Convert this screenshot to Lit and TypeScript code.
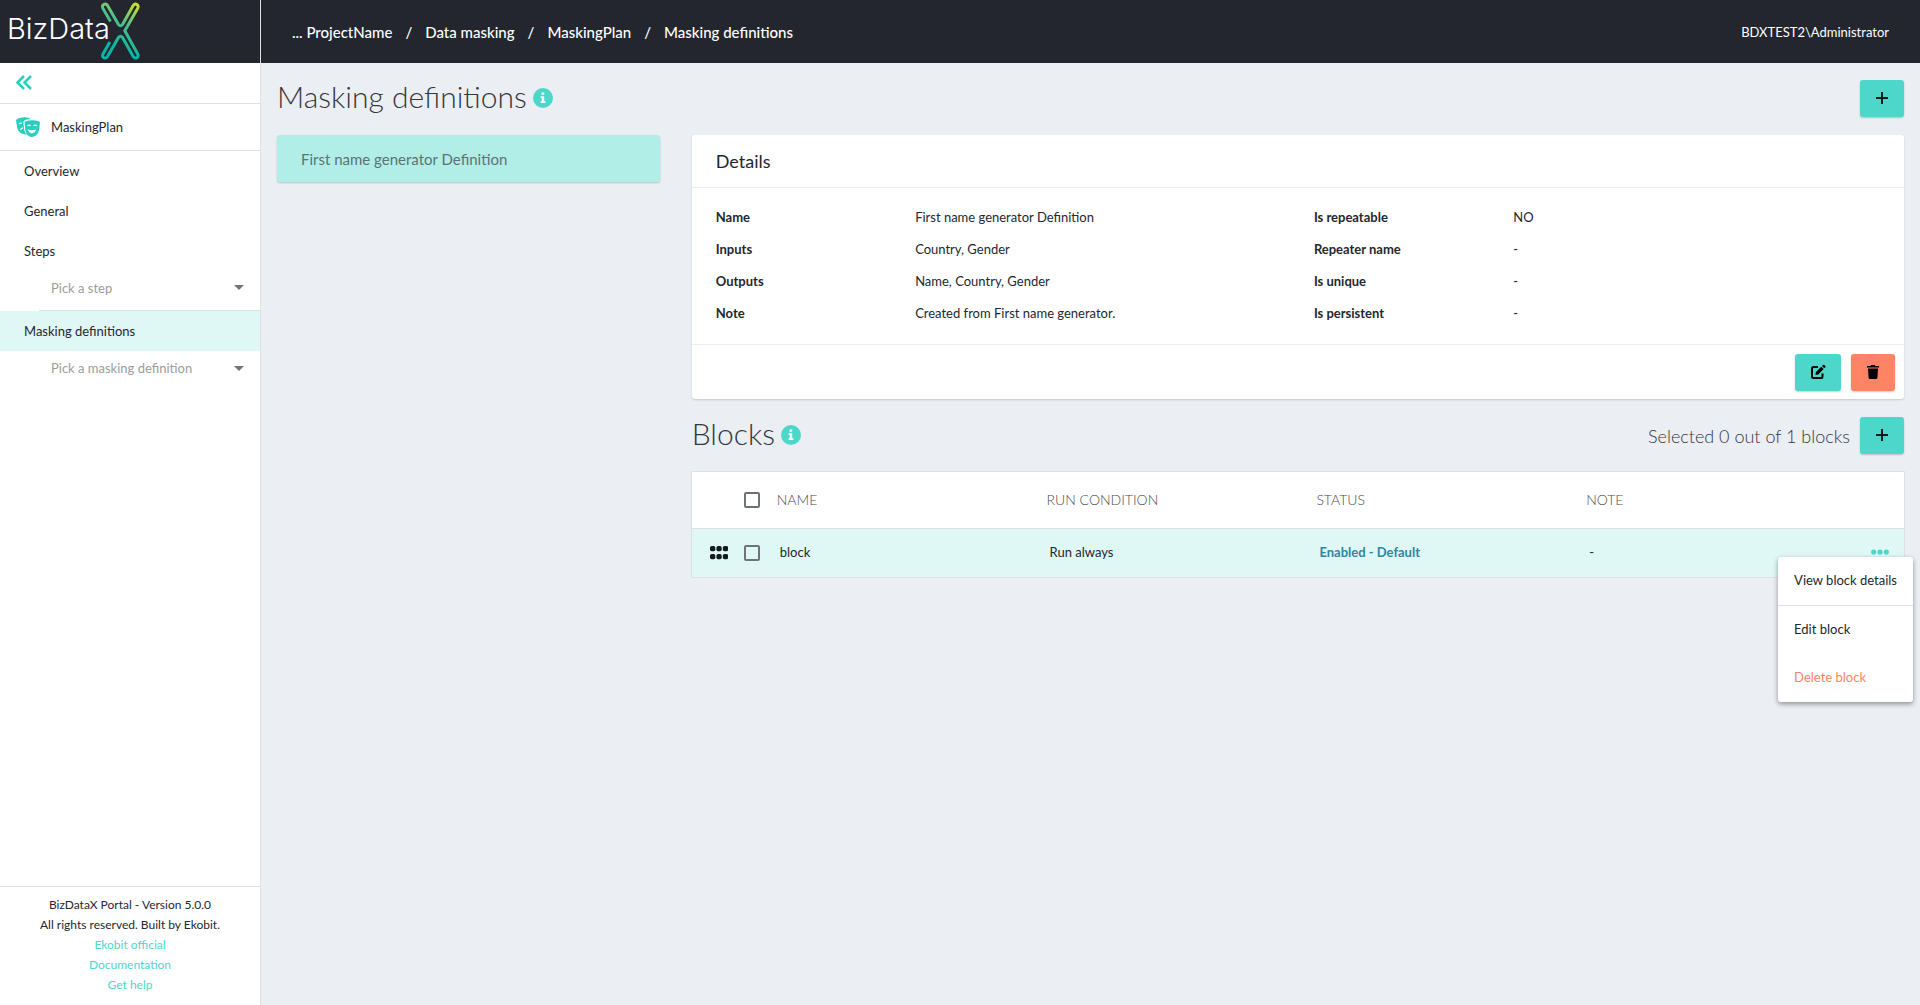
import { LitElement, html, css, svg } from "lit";
import { customElement } from "lit/decorators.js";

const plus = svg`<path d="M6 0v12M0 6h12" fill="none" stroke="#0d1a1c" stroke-width="2"/>`;

@customElement("app-root")
export class AppRoot extends LitElement {
  private details = [
    ["Name", "First name generator Definition", "Is repeatable", "NO"],
    ["Inputs", "Country, Gender", "Repeater name", "-"],
    ["Outputs", "Name, Country, Gender", "Is unique", "-"],
    ["Note", "Created from First name generator.", "Is persistent", "-"],
  ];

  static styles = css`
    :host {
      display: block;
      font-family: Lato, "Liberation Sans", sans-serif;
      font-size: 13px;
      line-height: 20px;
      color: #24272f;
      --teal: #4dd7ca;
      --line: #e0e0e0;
    }
    * { box-sizing: border-box; }
    button, select { font: inherit; border: 0; background: none; padding: 0; margin: 0; cursor: pointer; }
    a { color: inherit; text-decoration: none; }
    svg { display: block; flex: none; }
    h1, h2, h3, p { margin: 0; font-weight: 400; }
    .app { display: grid; grid-template-columns: 261px 1fr; grid-template-rows: 63px 1fr; min-height: 100vh; background: #ebeef3; }
    .brand { background: #23262f; border-right: 1px solid var(--line); display: flex; align-items: center; padding-left: 6px; }
    .wordmark { font-family: Inter, Lato, sans-serif; font-size: 29px; font-weight: 300; }
    .topbar { background: #23262f; color: #fff; display: flex; align-items: center; justify-content: space-between; padding: 0 31px; }
    .crumbs { display: flex; gap: 13px; font-size: 15px; font-weight: 500; }
    .user { font-size: 13px; }
    .side { background: #fff; border-right: 1px solid var(--line); display: flex; flex-direction: column; }
    .collapse { height: 41px; border-bottom: 1px solid var(--line); padding: 0 16px 2px; display: flex; align-items: center; }
    .plan { height: 47px; border-bottom: 1px solid var(--line); padding: 0 16px; display: flex; align-items: center; gap: 11px; }
    .nav { display: flex; flex-direction: column; flex: 1; }
    .item { height: 40px; padding: 0 24px; display: flex; align-items: center; }
    .item.active { background: #dff7f5; }
    .pick { display: grid; align-items: center; height: 40px; margin-left: 39px; padding-bottom: 6px; }
    .pick.lined { border-bottom: 1px solid var(--line); }
    .pick > * { grid-area: 1 / 1; }
    .pick select { appearance: none; width: 100%; height: 32px; padding-left: 12px; color: #9c9c9c; text-align: left; }
    .pick svg { justify-self: end; margin-right: 16px; pointer-events: none; }
    .foot { border-top: 1px solid var(--line); padding: 8px 0 10px; text-align: center; font-size: 12px; display: flex; flex-direction: column; }
    .foot a { color: var(--teal); }
    .main { min-width: 0; }
    .bar { display: flex; align-items: center; justify-content: space-between; padding: 18px 0; }
    .main > .bar { padding: 17px 16px 18px; }
    .title { display: flex; align-items: center; gap: 6px; padding-bottom: 4px; font-size: 30px; line-height: 33px; font-weight: 300; color: #33373f; }
    .title svg { margin-top: 2px; }
    .btn { height: 37px; width: 44px; padding-bottom: 2px; border-radius: 3px; background: var(--teal); display: flex; align-items: center; justify-content: center; box-shadow: 0 1px 2px rgba(0, 0, 0, 0.2); }
    .btn.edit { width: 46px; }
    .btn.danger { background: #ff8364; }
    .cols { display: flex; align-items: flex-start; }
    .list { width: 25%; padding: 0 16px; }
    .body { width: 75%; padding: 0 16px; }
    .def { width: 100%; height: 47px; padding: 0 24px; text-align: left; font-size: 15px; border-radius: 3px; background: #b1eee7; color: #5d7275; box-shadow: 0 1px 2px rgba(0, 0, 0, 0.2); }
    .card { background: #fff; border-radius: 3px; box-shadow: 0 1px 2px rgba(0, 0, 0, 0.16); }
    .card h2 { height: 53px; padding: 0 24px; font-size: 18px; line-height: 52px; border-bottom: 1px solid #ebeef1; }
    .props { display: grid; grid-template-columns: 2fr 4fr 2fr 4fr; margin: 0; padding: 13px 8px 15px; line-height: 32px; }
    .props dt, .props dd { margin: 0; padding: 0 16px; }
    .props dt { font-weight: 700; }
    .actions { border-top: 1px solid #ebeef1; padding: 9px 9px 8px; display: flex; justify-content: flex-end; gap: 10px; }
    .right { display: flex; align-items: center; gap: 10px; font-size: 18px; font-weight: 300; color: #33373f; }
    table { width: 100%; table-layout: fixed; border-collapse: collapse; background: #fff; box-shadow: 0 0 0 1px var(--line); }
    th, td { padding: 0; text-align: left; }
    th { height: 56px; font-size: 14px; font-weight: 300; color: #4c4c4c; }
    td { height: 49px; padding: 0 0 2px 3px; }
    tbody tr { background: #dff7f5; border-top: 1px solid var(--line); }
    .c-lead { width: 85px; }
    .c-end { width: 48px; }
    .lead { padding: 0 0 0 18px; }
    .tools { display: flex; align-items: center; justify-content: space-between; padding-right: 17px; }
    .tools.only { justify-content: flex-end; }
    input { appearance: none; margin: 0; width: 16px; height: 16px; border: 2px solid #6f7373; border-radius: 2px; }
    .status { font-weight: 700; color: #2f86a0; }
    .end { padding: 0 0 2px; }
    .more { position: relative; display: flex; justify-content: center; }
    .menu { position: absolute; top: 8px; right: -9px; z-index: 1; background: #fff; border-radius: 3px; box-shadow: 0 2px 5px rgba(0, 0, 0, 0.4); display: flex; flex-direction: column; white-space: nowrap; }
    .menu button { height: 48px; padding: 0 16px 1px; text-align: left; color: #24272f; }
    .menu button.first { height: 49px; border-bottom: 1px solid var(--line); }
    .menu button.del { color: #ff8364; }
  `;

  private info() {
    return html`<svg width="20" height="20" viewBox="0 0 20 20" aria-hidden="true">
      <circle cx="10" cy="10" r="10" fill="#4dd7ca" />
      <path d="M8.6 4.4h2.6v2.4H8.6zM7.6 8.2h3.6v5h1.200v1.900H7.600v-1.900h1.100v-3.100H7.600z" fill="#fff" />
    </svg>`;
  }

  private caret() {
    return html`<svg width="10" height="5" viewBox="0 0 10 5" aria-hidden="true"><path d="M0 0h10L5 5z" fill="#757575" /></svg>`;
  }

  render() {
    return html`
      <div class="app">
        <a class="brand" href="#" aria-label="BizDataX">
          <svg width="140" height="63" viewBox="6 0 140 63">
            <defs>
              <linearGradient id="g" gradientUnits="userSpaceOnUse" x1="137" y1="3" x2="112" y2="44">
                <stop offset="0" stop-color="#d6e02a" />
                <stop offset="0.5" stop-color="#4fc08a" />
                <stop offset="1" stop-color="#07b6a6" />
              </linearGradient>
            </defs>
            <text class="wordmark" x="7" y="39" fill="#fff">BizData</text>
            <path d="M110.500 21.500L102.800 8.200Q101.600 5 104.300 4.200Q106.300 3.600 107.500 5.600L118.500 24.600Q120.500 27 122.500 24.600L133.200 5.600Q134.600 3.400 136.600 4.300Q139 5.400 137.700 8.200L124.800 30.700L137.700 54Q139 56.800 136.600 57.900Q134.500 58.600 133.200 56.500L122.500 37.400Q120.500 35 118.500 37.400L107.500 56.500Q106.200 58.600 104.100 57.900Q101.700 56.800 103 54L109.800 42" fill="none" stroke="url(#g)" stroke-width="3" stroke-linecap="butt" />
          </svg>
        </a>
        <header class="topbar">
          <nav class="crumbs" aria-label="Breadcrumb">
            <a href="#">... ProjectName</a><span>/</span><a href="#">Data masking</a><span>/</span><a href="#">MaskingPlan</a><span>/</span><a href="#">Masking definitions</a>
          </nav>
          <span class="user">BDXTEST2\\Administrator</span>
        </header>
        <aside class="side">
          <div class="collapse">
            <button aria-label="Collapse menu">
              <svg width="16" height="15" viewBox="0 0 16 15"><path d="M8 1L1.500 7.500L8 14M15 1L8.500 7.500L15 14" fill="none" stroke="#26cfc0" stroke-width="2.500" /></svg>
            </button>
          </div>
          <div class="plan">
            <svg width="24" height="20" viewBox="0 0 24 20" aria-hidden="true">
              <path d="M.5 2.600C4 .2 8.600-.5 13.300.9c.7.200.9.700.9 1.500C11.500 2.200 9.500 2.900 8.200 3.700 7.500 4.200 7.300 4.800 7.400 5.600L8 11c.2 2.500 1 4.500 2.600 6.400C5 17.600 2 14.500 1.200 10.500L.1 4Q-.1 3 .5 2.600z" fill="#26cfc0" />
              <path d="M3 7.200q1.200-1.600 2.800-.8M4.200 13q1-1.900 2.900-2.100" fill="none" stroke="#fff" stroke-width="1.200" />
              <path d="M9.300 4.600c4.300-1.800 9-1.800 13.900 0 .5.2.8.6.7 1.200l-.7 6.200c-.6 4.800-3.600 7.800-7.500 8-3.700-.2-6.100-3.400-6.500-8L8.600 5.800q-.1-.8.7-1.200z" fill="#26cfc0" />
              <path d="M11.400 9q1.500-1.700 3.200 0M17.600 9q1.500-1.700 3.200 0" fill="none" stroke="#fff" stroke-width="1.300" />
              <path d="M11.600 12.300q4.300 2 8.600 0-1.200 4.100-4.300 4.100-3.100 0-4.300-4.100z" fill="#fff" />
            </svg>
            <span>MaskingPlan</span>
          </div>
          <nav class="nav" aria-label="Sections">
            <a class="item" href="#">Overview</a>
            <a class="item" href="#">General</a>
            <a class="item" href="#">Steps</a>
            <div class="pick lined">
              <select aria-label="Step"><option>Pick a step</option></select>${this.caret()}
            </div>
            <a class="item active" href="#" aria-current="page">Masking definitions</a>
            <div class="pick">
              <select aria-label="Masking definition"><option>Pick a masking definition</option></select>${this.caret()}
            </div>
          </nav>
          <footer class="foot">
            <span>BizDataX Portal - Version 5.0.0</span>
            <span>All rights reserved. Built by Ekobit.</span>
            <a href="#">Ekobit official</a>
            <a href="#">Documentation</a>
            <a href="#">Get help</a>
          </footer>
        </aside>
        <main class="main">
          <div class="bar">
            <h1 class="title">Masking definitions ${this.info()}</h1>
            <button class="btn" aria-label="Add masking definition"><svg width="12" height="12" viewBox="0 0 12 12">${plus}</svg></button>
          </div>
          <div class="cols">
            <section class="list"><button class="def">First name generator Definition</button></section>
            <section class="body">
              <div class="card">
                <h2>Details</h2>
                <dl class="props">
                  ${this.details.map((r) => html`<dt>${r[0]}</dt><dd>${r[1]}</dd><dt>${r[2]}</dt><dd>${r[3]}</dd>`)}
                </dl>
                <div class="actions">
                  <button class="btn edit" aria-label="Edit">
                    <svg width="16" height="16" viewBox="0 0 16 16"><path d="M8 3H3.500Q2 3 2 4.500v8Q2 14 3.500 14h7.500q1.500 0 1.500-1.500V9.500" fill="none" stroke="#000" stroke-width="2" /><path d="M5.500 11l.4-2.900L11.300 2.700l2.300 2.300L8.300 10.400zM12 2l1-1q.7-.6 1.400 0l.9.9q.6.7 0 1.400l-1 1z" fill="#000" /></svg>
                  </button>
                  <button class="btn danger" aria-label="Delete">
                    <svg width="12" height="14" viewBox="0 0 12 14"><path d="M0 1h3.500l.8-1h3.400l.8 1H12v1.600H0zM1 3.500h10l-.6 9.200q-.1 1.300-1.400 1.300H3q-1.300 0-1.400-1.300z" fill="#000" /></svg>
                  </button>
                </div>
              </div>
              <div class="bar">
                <h2 class="title">Blocks ${this.info()}</h2>
                <div class="right">
                  <span>Selected 0 out of 1 blocks</span>
                  <button class="btn" aria-label="Add block"><svg width="12" height="12" viewBox="0 0 12 12">${plus}</svg></button>
                </div>
              </div>
              <table>
                <colgroup><col class="c-lead" /><col /><col /><col /><col /><col class="c-end" /></colgroup>
                <thead>
                  <tr>
                    <th class="lead"><div class="tools only"><input type="checkbox" aria-label="Select all blocks" /></div></th>
                    <th>NAME</th><th>RUN CONDITION</th><th>STATUS</th><th>NOTE</th><th></th>
                  </tr>
                </thead>
                <tbody>
                  <tr>
                    <td class="lead">
                      <div class="tools">
                        <svg width="18" height="14" viewBox="0 0 18 14" aria-hidden="true">
                          ${[0, 1, 2].map((i) => [0, 1].map((j) => svg`<rect x=${i * 6 + i * 0.4} y=${j * 8} width="5.300" height="5.300" rx="1.800" fill="#15191c"/>`))}
                        </svg>
                        <input type="checkbox" aria-label="Select block" />
                      </div>
                    </td>
                    <td>block</td><td>Run always</td><td class="status">Enabled - Default</td><td>-</td>
                    <td class="end">
                      <div class="more">
                        <button aria-label="Block actions"><svg width="18" height="6" viewBox="0 0 18 6"><g fill="#4dd7ca"><circle cx="2.700" cy="3" r="2.600" /><circle cx="9" cy="3" r="2.600" /><circle cx="15.300" cy="3" r="2.600" /></g></svg></button>
                        <div class="menu" role="menu">
                          <button class="first" role="menuitem">View block details</button>
                          <button role="menuitem">Edit block</button>
                          <button class="del" role="menuitem">Delete block</button>
                        </div>
                      </div>
                    </td>
                  </tr>
                </tbody>
              </table>
            </section>
          </div>
        </main>
      </div>
    `;
  }
}
